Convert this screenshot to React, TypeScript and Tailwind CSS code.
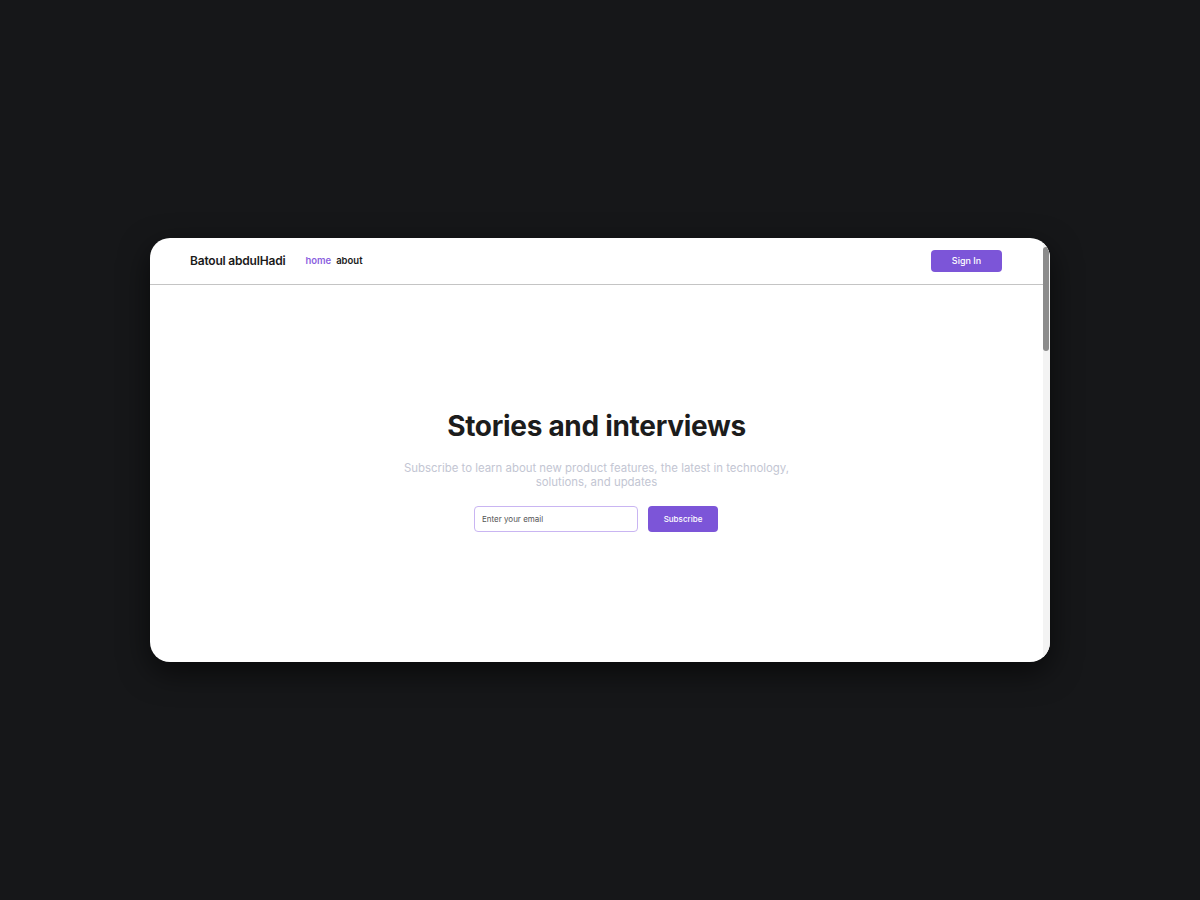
import React from 'react';

export default function App() {
  return (
    <div className="min-h-[900px] w-full bg-[#161719] flex items-center justify-center font-['Inter',sans-serif]">
      <div className="w-[900px] h-[424px] bg-white rounded-[20px] overflow-hidden flex shadow-[0_10px_30px_rgba(0,0,0,0.6)]">
        {/* page */}
        <div className="flex-1 flex flex-col">
          <header className="h-[47px] flex items-center px-10 border-b border-[#c4c4c4]">
            <span className="text-[12px] font-semibold text-[#1a1a1a] tracking-[-0.2px]">Batoul abdulHadi</span>
            <nav className="flex gap-[5px] ml-[20px] text-[9.5px] font-semibold">
              <a className="text-[#8b5fe0]">home</a>
              <a className="text-[#1a1a1a]">about</a>
            </nav>
            <button className="ml-auto mr-[1px] w-[71px] h-[22px] rounded-[4px] bg-[#7c55d8] text-white text-[9px] font-medium">
              Sign In
            </button>
          </header>

          {/* hero */}
          <section className="flex-1 flex flex-col items-center pt-[124px]">
            <h1 className="text-[28px] leading-[34px] font-bold text-[#1c1c1c] tracking-[-0.3px]">Stories and interviews</h1>
            <p className="mt-[18px] w-[410px] text-center text-[11.4px] leading-[14px] text-[#c3c6d3]">
              Subscribe to learn about new product features, the latest in technology, solutions, and updates
            </p>
            <div className="mt-[17px] flex gap-[10px] pr-[1px]">
              <input
                placeholder="Enter your email"
                className="w-[164px] h-[26px] rounded-[4px] border border-[#c9b5f2] px-[7px] text-[8px] placeholder:text-[#555] outline-none"
              />
              <button className="w-[70px] h-[26px] rounded-[4px] bg-[#7c55d8] text-white text-[8px] font-medium">
                Subscribe
              </button>
            </div>
          </section>
        </div>

        {/* scrollbar */}
        <div className="w-[7px] bg-[#f3f3f3] pt-[9px] pr-[1px]">
          <div className="h-[104px] w-[6px] rounded-full bg-[#8c8c8c]" />
        </div>
      </div>
    </div>
  );
}
